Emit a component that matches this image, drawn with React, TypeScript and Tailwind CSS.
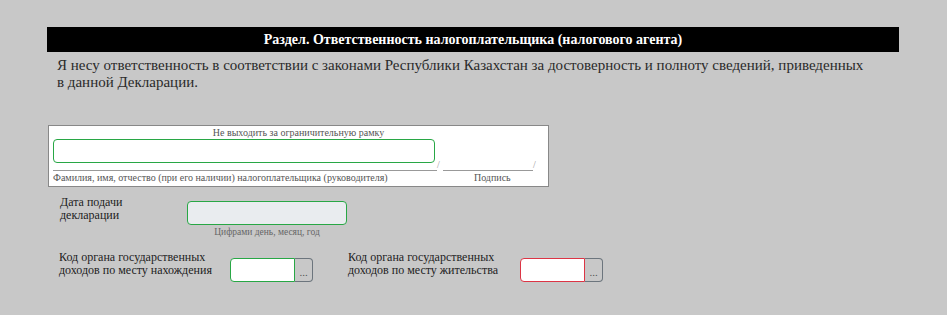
export default function App() {
  return (
    <div className="min-h-screen bg-[#c8c8c8] pt-[27px] font-['Liberation_Serif']">
      <div className="ml-[47px] w-[852px]">
        {/* Section header */}
        <div className="h-[25px] bg-black text-center text-[14px] font-bold leading-[25px] text-white">
          Раздел. Ответственность налогоплательщика (налогового агента)
        </div>

        <p className="mt-[5px] w-[820px] pl-[10px] text-[15px] leading-[17px] text-[#2a2a2a]">
          Я несу ответственность в соответствии с законами Республики Казахстан за достоверность и полноту сведений, приведенных в данной Декларации.
        </p>

        {/* Signature frame */}
        <div className="ml-[1px] mt-[34px] w-[501px] border border-[#888] bg-white px-[4px] pb-[2px]">
          <div className="text-center text-[10px] leading-[13px] text-[#555]">Не выходить за ограничительную рамку</div>
          <div className="flex items-end">
            <div className="w-[384px] border-b border-[#999] pb-[7px]">
              <div className="h-[24px] w-[382px] rounded-[4px] border border-[#28a745] bg-white" />
            </div>
            <span className="w-[6px] text-[10px] leading-[12px] text-[#999]">/</span>
            <div className="w-[90px] border-b border-[#999]" />
            <span className="text-[10px] leading-[12px] text-[#999]">/</span>
          </div>
          <div className="flex text-[10px] leading-[13px] text-[#555]">
            <span className="w-[390px]">Фамилия, имя, отчество (при его наличии) налогоплательщика (руководителя)</span>
            <span className="w-[104px] text-center">Подпись</span>
          </div>
        </div>

        {/* Date */}
        <div className="mt-[9px] flex">
          <div className="ml-[13px] w-[127px] text-[12px] leading-[13px] text-[#222]">
            <div className="w-[90px]">Дата подачи декларации</div>
          </div>
          <div className="flex w-[160px] flex-col items-center pt-[5px]">
            <div className="h-[24px] w-[160px] rounded-[4px] border border-[#28a745] bg-[#e9ecef]" />
            <span className="mt-[1px] text-[9.5px] leading-[12px] text-[#666]">Цифрами день, месяц, год</span>
          </div>
        </div>

        {/* Tax office codes */}
        <div className="mt-[13px] flex">
          <div className="ml-[12px] w-[171px] text-[12px] leading-[13px] text-[#222]">
            <div className="w-[160px]">Код органа государственных доходов по месту нахождения</div>
          </div>
          <div className="mt-[7px] flex">
            <div className="h-[24px] w-[65px] rounded-l-[4px] border border-[#28a745] bg-white" />
            <button className="flex h-[24px] w-[18px] items-end justify-center rounded-r-[4px] border border-l-0 border-[#6c757d] pb-[3px] text-[11px] leading-none text-[#555]">...</button>
          </div>
          <div className="ml-[35px] w-[172px] text-[12px] leading-[13px] text-[#222]">
            <div className="w-[160px]">Код органа государственных доходов по месту жительства</div>
          </div>
          <div className="mt-[7px] flex">
            <div className="h-[24px] w-[65px] rounded-l-[4px] border border-[#dc3545] bg-white" />
            <button className="flex h-[24px] w-[18px] items-end justify-center rounded-r-[4px] border border-l-0 border-[#6c757d] pb-[3px] text-[11px] leading-none text-[#555]">...</button>
          </div>
        </div>
      </div>
    </div>
  )
}
